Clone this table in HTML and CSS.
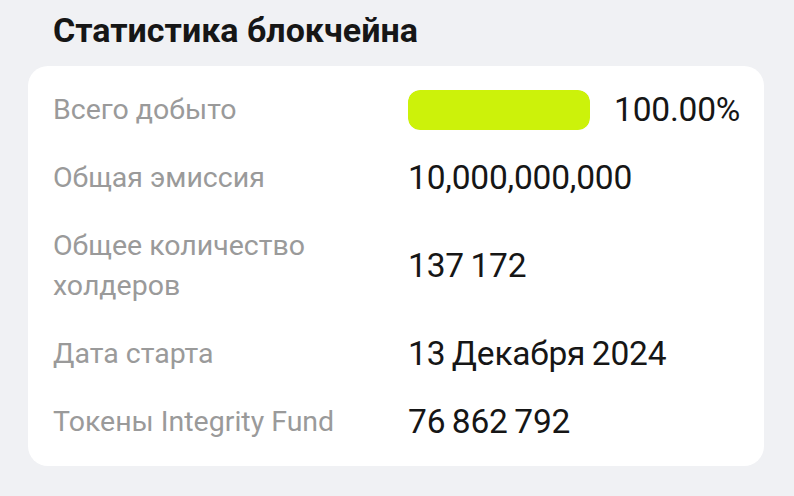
FILE: index.html
```html
<!DOCTYPE html>
<html lang="ru">
<head>
<meta charset="utf-8">
<link rel="stylesheet" href="styles.css">
</head>
<body>
<h2 class="title">Статистика блокчейна</h2>
<div class="card">
  <div class="row">
    <div class="label">Всего добыто</div>
    <div class="value progress-value">
      <div class="bar"><div class="bar-fill" style="width:100%"></div></div>
      <span>100.00%</span>
    </div>
  </div>
  <div class="row">
    <div class="label">Общая эмиссия</div>
    <div class="value">10,000,000,000</div>
  </div>
  <div class="row">
    <div class="label">Общее количество<br>холдеров</div>
    <div class="value">137 172</div>
  </div>
  <div class="row">
    <div class="label">Дата старта</div>
    <div class="value">13 Декабря 2024</div>
  </div>
  <div class="row">
    <div class="label">Токены Integrity Fund</div>
    <div class="value">76 862 792</div>
  </div>
</div>
</body>
</html>
```
FILE: styles.css
```css
* { box-sizing: border-box; }
html, body { margin: 0; padding: 0; }
body {
  background: #f0f1f4;
  font-family: Roboto, "Noto Sans", sans-serif;
  padding: 12px 30px 0 28px;
  width: 794px;
}
.title {
  margin: 0 0 18px 25px;
  font-size: 34px;
  font-weight: 700;
  line-height: 36px;
  color: #161616;
}
.card {
  background: #ffffff;
  border-radius: 20px;
  padding: 24px 25px;
  display: flex;
  flex-direction: column;
  gap: 28px;
  width: 736px;
}
.row {
  display: grid;
  grid-template-columns: 355px 1fr;
  align-items: center;
}
.label {
  font-size: 28.5px;
  line-height: 40px;
  color: #9a9a9a;
}
.value {
  font-size: 33.5px;
  line-height: 40px;
  color: #161616;
  letter-spacing: -0.2px;
  word-spacing: -1.5px;
}
.progress-value {
  display: flex;
  align-items: center;
  gap: 24px;
}
.bar {
  width: 182px;
  height: 40px;
  border-radius: 12px;
  background: #eeeeee;
  overflow: hidden;
}
.bar-fill {
  height: 100%;
  background: #ccf20a;
  border-radius: 12px;
}
```
